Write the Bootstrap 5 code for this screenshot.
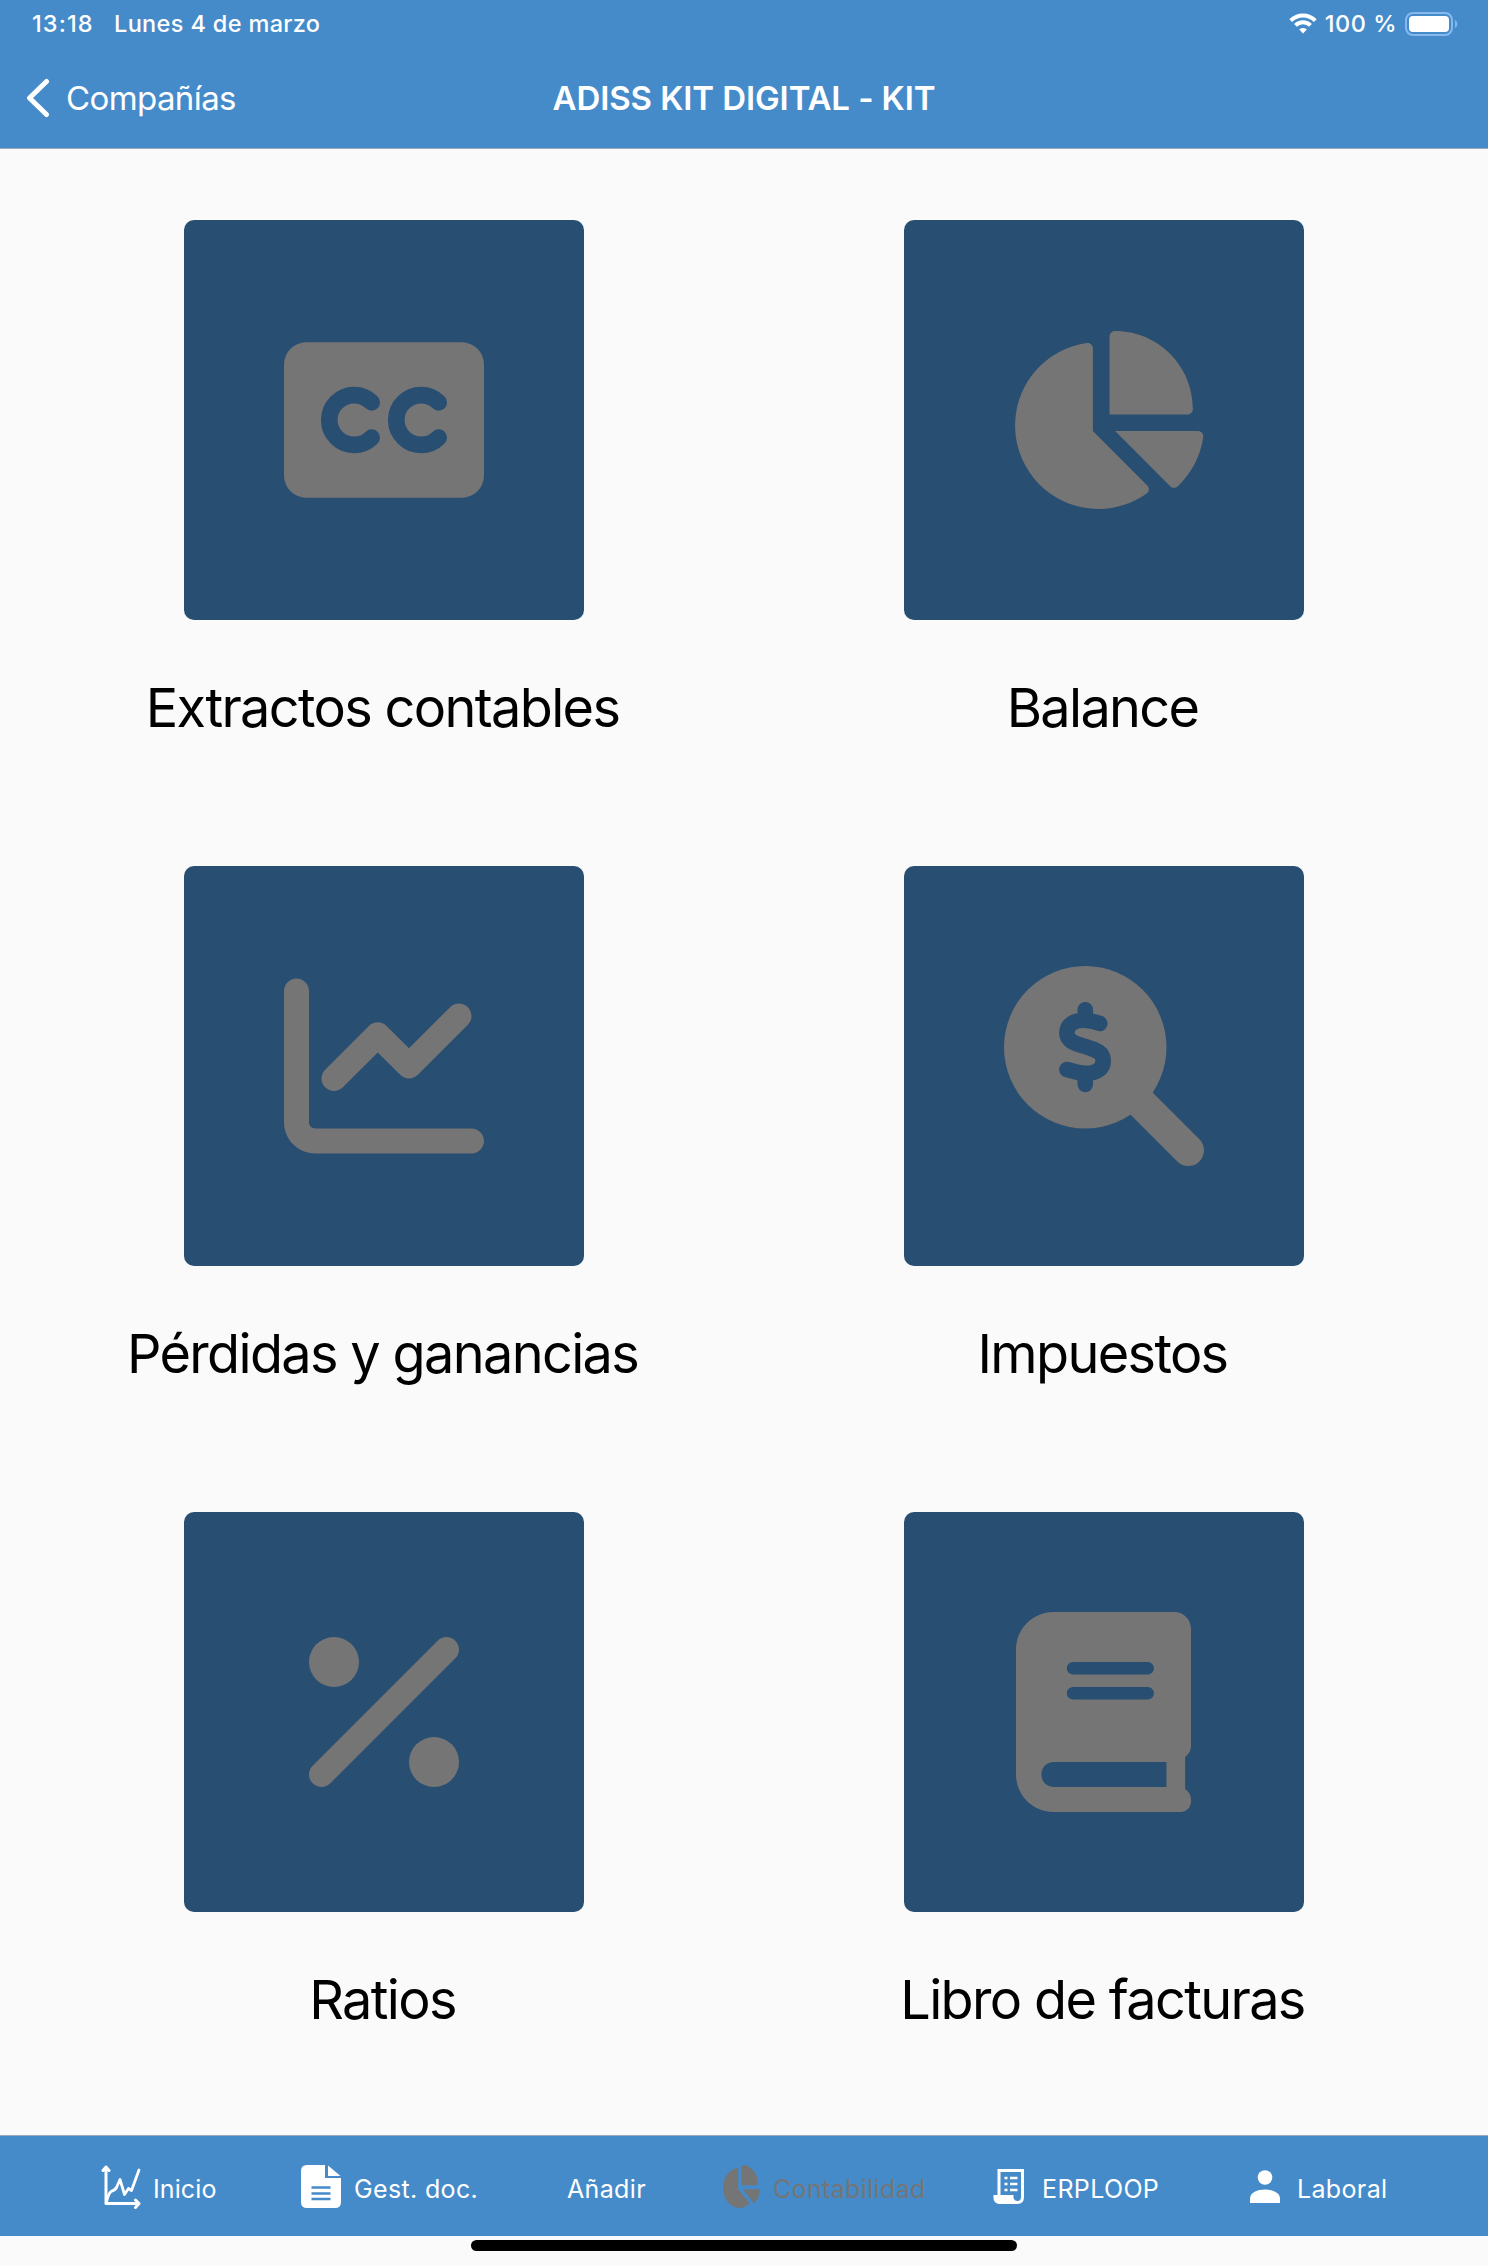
<!DOCTYPE html>
<html lang="es">
<head>
<meta charset="utf-8">
<meta name="viewport" content="width=device-width, initial-scale=1">
<title>ADISS KIT DIGITAL - KIT</title>
<link href="https://cdn.jsdelivr.net/npm/bootstrap@5.3.0/dist/css/bootstrap.min.css" rel="stylesheet">
<style>
  body { font-family: Inter, "Liberation Sans", sans-serif; background: #fafafa; color: #000; height: 2266px; overflow: hidden; }
  svg { display: block; flex: none; }
  .app-header { background: #458bca; height: 149px; border-bottom: 1px solid #9aa9bd; color: #fff; }
  .status-row { height: 47px; padding: 0 29px 0 32px; font-size: 23.5px; font-weight: 500; line-height: 47px; }
  .st-time { width: 82px; letter-spacing: 1.1px; }
  .st-date { letter-spacing: .35px; }
  .st-batt { letter-spacing: .5px; }
  .title-row { height: 102px; line-height: 102px; font-size: 33px; padding: 0 26px; }
  .title-row > * { flex: 1 1 0; white-space: nowrap; }
  .nav-back { color: #fff; text-decoration: none; gap: 16px; letter-spacing: -.6px; }
  .nav-title { font-size: 33px; font-weight: 600; line-height: inherit; letter-spacing: -.1px; margin: 0; }
  .tile-grid { padding: 71px 24px 0; height: 1986px; }
  .tile-item { height: 646px; color: #000; text-decoration: none; }
  .tile-box { width: 400px; height: 400px; border-radius: 10px; background: #284e72; color: #757575; }
  .tile-label { margin-top: 48px; padding-right: 3px; font-size: 54px; line-height: 80px; letter-spacing: -1.65px; white-space: nowrap; }
  .book-ico { margin-right: 1px; }
  .tab-strip { background: #458bca; height: 101px; border-top: 1px solid #9aa9bd; padding: 7px 0 0 101px; }
  .tab-link { color: #fff; text-decoration: none; font-size: 25px; letter-spacing: .35px; white-space: nowrap; flex: none; }
  .tab-link.is-active { color: #757575; }
  .tab-ico { flex: none; margin-top: -6px; }
  .tab-short { padding-left: 11px; letter-spacing: .1px; }
  .tab-mid { padding-left: 13px; }
  .tab-wide { padding-left: 17px; }
  .home-bar { width: 546px; height: 11px; border-radius: 6px; background: #000; margin: 4px 0 0 471px; }
</style>
<script src="https://cdn.jsdelivr.net/npm/bootstrap@5.3.0/dist/js/bootstrap.bundle.min.js"></script>
</head>
<body class="d-flex flex-column">
<header class="app-header flex-shrink-0">
  <div class="status-row d-flex align-items-center">
    <span class="st-time">13:18</span>
    <span class="st-date">Lunes 4 de marzo</span>
    <div class="d-flex align-items-center ms-auto">
      <svg width="28" height="21" viewBox="0 0 28 21" fill="none" stroke="#fff" stroke-width="4"><path d="M1.700 7.600C8.500.7 19.500.7 26.300 7.600"/><path d="M6.500 12.300c4.200-4.200 10.800-4.200 15 0"/><path d="M14 20.500l-3.800-4c2.100-2 5.500-2 7.600 0z" fill="#fff" stroke="none"/></svg>
      <span class="st-batt ms-2">100 %</span>
      <svg class="ms-2" width="54" height="24" viewBox="0 0 54 24"><rect x="1" y="1" width="46" height="22" rx="7" fill="none" stroke="#84b8ef" stroke-width="2"/><rect x="4" y="4" width="40" height="16" rx="4" fill="#fff"/><path d="M50 8c3 1.200 3 6.800 0 8z" fill="#84b8ef"/></svg>
    </div>
  </div>
  <nav class="title-row d-flex align-items-center" aria-label="Cabecera">
    <a class="nav-back d-flex align-items-center" href="#"><svg width="24" height="40" viewBox="0 0 24 40" fill="none" stroke="#fff" stroke-width="5" stroke-linecap="round" stroke-linejoin="round"><path d="M20.500 3.500 3.500 20l17 16.500"/></svg>Compañías</a>
    <h1 class="nav-title text-center">ADISS KIT DIGITAL - KIT</h1>
    <span></span>
  </nav>
</header>

<main class="tile-grid flex-shrink-0">
  <div class="row g-0">
    <a class="tile-item col-6 d-flex flex-column align-items-center" href="#">
      <div class="tile-box d-flex align-items-center justify-content-center"><svg width="200" height="178" viewBox="0 0 576 512"><rect y="32" width="576" height="448" rx="64" fill="#757575"/><g fill="none" stroke="#284e72" stroke-width="48" stroke-linecap="round"><path d="M252.500 205.500a71.500 71.500 0 1 0 0 101"/><path d="M445.500 205.500a71.500 71.500 0 1 0 0 101"/></g></svg></div>
      <div class="tile-label">Extractos contables</div>
    </a>
    <a class="tile-item col-6 d-flex flex-column align-items-center" href="#">
      <div class="tile-box d-flex align-items-center justify-content-center"><svg width="200" height="178" viewBox="0 0 576 512" fill="currentColor"><path id="pie" d="M304 240V16.600c0-9 7-16.600 16-16.600C443.700 0 544 100.300 544 224c0 9-7.600 16-16.600 16H304zM32 272C32 150.700 122.100 50.300 239 34.300c9.200-1.300 17 6.100 17 15.400V288L412.500 444.500c6.700 6.700 6.200 17.700-1.500 23.100C371.800 495.600 323.800 512 272 512C139.500 512 32 404.600 32 272zm526.400 16c9.300 0 16.600 7.800 15.400 17c-7.700 55.900-34.600 105.600-73.900 142.300c-6 5.600-15.400 5.200-21.200-.7L320 288H558.400z"/></svg></div>
      <div class="tile-label">Balance</div>
    </a>
    <a class="tile-item col-6 d-flex flex-column align-items-center" href="#">
      <div class="tile-box d-flex align-items-center justify-content-center"><svg width="200" height="200" viewBox="0 0 512 512" fill="currentColor"><path d="M64 64c0-17.700-14.300-32-32-32S0 46.300 0 64V400c0 44.200 35.800 80 80 80H480c17.700 0 32-14.300 32-32s-14.300-32-32-32H80c-8.800 0-16-7.200-16-16V64zm406.600 86.600c12.500-12.500 12.500-32.800 0-45.300s-32.800-12.500-45.300 0L320 210.700l-57.400-57.400c-12.500-12.500-32.800-12.500-45.300 0l-112 112c-12.500 12.500-12.500 32.800 0 45.300s32.800 12.500 45.300 0L240 221.300l57.400 57.400c12.500 12.500 32.800 12.500 45.300 0l128-128z"/></svg></div>
      <div class="tile-label">Pérdidas y ganancias</div>
    </a>
    <a class="tile-item col-6 d-flex flex-column align-items-center" href="#">
      <div class="tile-box d-flex align-items-center justify-content-center"><svg width="200" height="200" viewBox="0 0 512 512" fill="none" stroke-linecap="round"><circle cx="208" cy="208" r="208" fill="#757575"/><path d="M300 300 472 472" stroke="#757575" stroke-width="80"/><path d="M208 112v20M208 284v19M245 147C230 142 215 139 204 139C178 139 161 152 161 171C161 191 178 198 208 206C238 215 254 222 254 243C254 264 235 275 208 275C195 275 178 270 161 265" stroke="#284e72" stroke-width="40"/></svg></div>
      <div class="tile-label">Impuestos</div>
    </a>
    <a class="tile-item col-6 d-flex flex-column align-items-center" href="#">
      <div class="tile-box d-flex align-items-center justify-content-center"><svg width="150" height="200" viewBox="0 0 384 512" fill="currentColor"><path d="M374.600 118.600c12.500-12.500 12.500-32.800 0-45.300s-32.800-12.500-45.300 0l-320 320c-12.500 12.500-12.500 32.800 0 45.300s32.800 12.500 45.300 0l320-320z"/><circle cx="64" cy="128" r="64"/><circle cx="320" cy="384" r="64"/></svg></div>
      <div class="tile-label">Ratios</div>
    </a>
    <a class="tile-item col-6 d-flex flex-column align-items-center" href="#">
      <div class="tile-box d-flex align-items-center justify-content-center"><svg class="book-ico" width="175" height="200" viewBox="0 0 448 512" fill="currentColor"><path fill-rule="evenodd" d="M96 0C43 0 0 43 0 96V416c0 53 43 96 96 96H421c15 0 27-12 27-27v-5c0-12-6-21-15-27V371c9-7 15-17 15-27V43c0-24-19-43-43-43zM97 384H385v64H97c-18 0-32-14-32-32s14-32 32-32zM146 128H337a16 16 0 0 1 0 32H146a16 16 0 0 1 0-32zM146 192H337a16 16 0 0 1 0 32H146a16 16 0 0 1 0-32z"/></svg></div>
      <div class="tile-label">Libro de facturas</div>
    </a>
  </div>
</main>

<nav class="tab-strip d-flex align-items-center flex-shrink-0" aria-label="Secciones">
  <a class="tab-link d-flex align-items-center" style="width:200px" href="#"><svg class="tab-ico" width="41" height="44" viewBox="0 0 41 44" fill="none" stroke="#fff" stroke-width="3" stroke-linecap="round" stroke-linejoin="round"><path d="M5 2v36.500h33M2 5.500 5 2l3 3.500M34.500 35l3.500 3.500-3.500 4"/><path d="M5.500 37c1-5 2-8 4.500-10.500 3-1 4.500-2 5.500-4l3.500-8 4.500 15 4-6 3 2 7.500-20.500" stroke-width="2.800"/></svg><span class="tab-short">Inicio</span></a>
  <a class="tab-link d-flex align-items-center" style="width:266px" href="#"><svg class="tab-ico" width="40" height="43" viewBox="0 0 40 43"><path d="M6 0h18v13h16v24q0 6-6 6H6q-6 0-6-6V6q0-6 6-6z" fill="#fff"/><path d="M27 0.500V11H39.500z" fill="#fff"/><path d="M10.500 22.500h19M10.500 28.500h19M10.500 34h19" stroke="#458bca" stroke-width="2.600"/></svg><span class="tab-mid">Gest. doc.</span></a>
  <a class="tab-link d-flex align-items-center" style="width:156px" href="#">Añadir</a>
  <a class="tab-link is-active d-flex align-items-center" style="width:270px" href="#"><svg class="tab-ico" width="37" height="43" viewBox="32 0 543 512" preserveAspectRatio="none" fill="currentColor"><use href="#pie"/></svg><span class="tab-mid">Contabilidad</span></a>
  <a class="tab-link d-flex align-items-center" style="width:257px" href="#"><svg class="tab-ico" width="32" height="35" viewBox="0 0 32 35" fill="none" stroke="#fff" stroke-width="3"><path d="M6 26V1.500h23.500V28q0 5.500-5 5.500H6"/><path d="M.500 26H20.500v3q1 3 4 3v3H6q-5.500-1-5.500-6z" fill="#fff" stroke="none"/><path d="M11.500 9h3M17 9h7.500M11.500 15h3M17 15h7.500M11.500 21h3M17 21h7.500" stroke-width="2.600"/></svg><span class="tab-wide">ERPLOOP</span></a>
  <a class="tab-link d-flex align-items-center" href="#"><svg class="tab-ico" width="30" height="33" viewBox="0 0 30 33" fill="#fff"><circle cx="15" cy="7.500" r="7.300"/><path d="M0 33v-4.500C0 16.500 30 16.500 30 28.500V33z"/></svg><span class="tab-wide">Laboral</span></a>
</nav>
<div class="home-bar flex-shrink-0"></div>
</body>
</html>
